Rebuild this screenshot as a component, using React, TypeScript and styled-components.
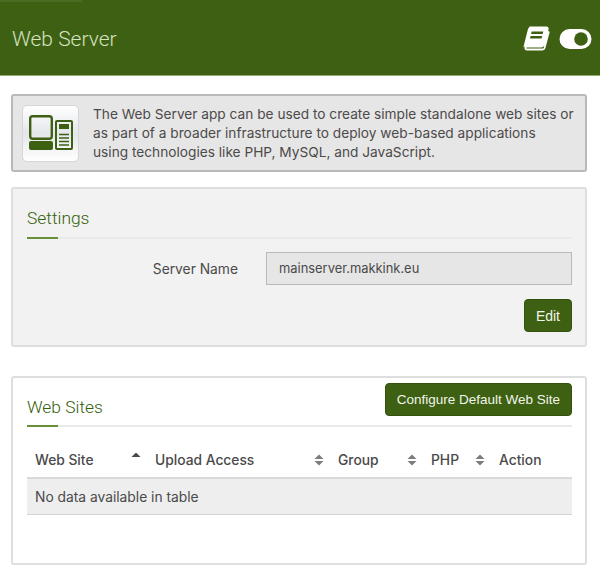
import React from 'react';
import {createGlobalStyle, styled} from 'styled-components';

const GlobalStyle = createGlobalStyle`
  html, body {
    margin: 0;
    padding: 0;
    background: #fff;
  }
  body {
    width: 600px;
    height: 569px;
    overflow: hidden;
    font-family: Inter, 'Open Sans', sans-serif;
    color: #4a4a4a;
  }
`;

const Header = styled.header`
  position: relative;
  display: flex;
  align-items: center;
  justify-content: space-between;
  box-sizing: border-box;
  height: 76px;
  padding: 3px 8px 0 12px;
  background: #3e6012;
  border-bottom: 1px solid #93ab72;
`;

const LoadBar = styled.div`
  position: absolute;
  top: 0;
  left: 0;
  width: 82px;
  height: 2px;
  background: #4b6b22;
`;

const Title = styled.h1`
  margin: 0;
  font-family: Roboto, sans-serif;
  font-size: 21px;
  font-weight: 300;
  color: #d5e2c0;
`;

const Tools = styled.div`
  display: flex;
  align-items: center;
  gap: 9px;
`;

const Content = styled.main`
  display: flex;
  flex-direction: column;
  padding: 18px 13px 0 11px;
`;

const Intro = styled.section`
  display: flex;
  align-items: center;
  gap: 14px;
  box-sizing: border-box;
  height: 78px;
  padding: 0 9px;
  background: #e6e6e6;
  border: 2px solid #b9b9b9;
  border-radius: 3px;
`;

const AppIcon = styled.div`
  display: flex;
  align-items: center;
  justify-content: center;
  flex: none;
  box-sizing: border-box;
  width: 57px;
  height: 57px;
  background: linear-gradient(#fff, #e3e6ea 50%, #fff);
  border: 1px solid #d6d6d6;
  border-radius: 5px;
`;

const IntroText = styled.p`
  margin: 0;
  font-size: 13.7px;
  line-height: 19px;
  color: #4d4a4a;
`;

const Panel = styled.section<{$muted?: boolean; $height: number; $gap: number}>`
  box-sizing: border-box;
  height: ${(p) => p.$height}px;
  margin-top: ${(p) => p.$gap}px;
  padding: 0 13px 0 14px;
  background: ${(p) => (p.$muted ? '#f2f2f2' : '#fff')};
  border: 2px solid #dedede;
  border-radius: 3px;
`;

const PanelHead = styled.div<{$height: number; $titleGap: number}>`
  position: relative;
  display: flex;
  align-items: flex-end;
  box-sizing: border-box;
  height: ${(p) => p.$height}px;
  padding-bottom: ${(p) => p.$titleGap}px;
  border-bottom: 2px solid #eaeaea;

  &::after {
    content: '';
    position: absolute;
    left: 0;
    bottom: -2px;
    width: 31px;
    height: 2px;
    background: #6a8f3a;
  }
`;

const PanelTitle = styled.h2`
  margin: 0;
  font-family: Roboto, sans-serif;
  font-size: 17.4px;
  font-weight: 300;
  line-height: 22px;
  color: #35600a;
`;

const Field = styled.div`
  display: flex;
  align-items: center;
  margin-top: 13px;
`;

const FieldLabel = styled.label`
  width: 211px;
  text-align: right;
  font-size: 13.8px;
`;

const FieldValue = styled.div`
  display: flex;
  align-items: center;
  flex: 1;
  box-sizing: border-box;
  height: 33px;
  margin-left: 28px;
  padding: 0 12px;
  font-size: 12.9px;
  background: #e6e6e6;
  border: 1px solid #b9b9b9;
`;

const Actions = styled.div`
  display: flex;
  justify-content: flex-end;
  margin-top: 14px;
`;

const Button = styled.button`
  box-sizing: border-box;
  height: 33px;
  padding: 0 11px;
  font-family: 'Liberation Sans', Arial, sans-serif;
  font-size: 14px;
  color: #f1f5ea;
  background: #3e6012;
  border: 1px solid #34520e;
  border-radius: 4px;
`;

const FloatingButton = styled(Button)`
  position: absolute;
  top: 5px;
  right: 0;
  font-size: 13.5px;
`;

const Table = styled.table`
  width: 100%;
  table-layout: fixed;
  border-collapse: collapse;
  margin-top: 14px;
  font-size: 13.8px;
`;

const HeadCell = styled.th<{$width: number}>`
  width: ${(p) => p.$width}px;
  box-sizing: border-box;
  height: 37px;
  padding: 2px 6px 0 8px;
  font-weight: 500;
  text-align: left;
  color: #4a4a4a;
  border-bottom: 2px solid #d9d9d9;
`;

const HeadInner = styled.div`
  display: flex;
  align-items: center;
  justify-content: space-between;
`;

const EmptyCell = styled.td`
  height: 35px;
  padding: 0 8px;
  background: #eeeeee;
  border-bottom: 1px solid #d4d4d4;
`;

type SortProps = {
  up?: boolean;
};

const SortIcon = ({up}: SortProps) => (
  <svg width="10" height="14" viewBox="0 0 10 14" aria-hidden="true">
    <path d="M5 1.5 9.5 6h-9z" fill={up ? '#4a4a4a' : '#7d7d7d'} transform={up ? 'translate(0 -2)' : ''} />
    {!up && <path d="M5 12.5.5 8h9z" fill="#7d7d7d" />}
  </svg>
);

const BookIcon = () => (
  <svg width="28" height="26" viewBox="0 0 28 26" aria-hidden="true">
    <path
      d="M8 1.5h16.5c1 0 1.4.7 1.2 1.6L21.5 19c-.3 1-1 1.5-2 1.5H5c-2.2 0-2.2 3 0 3h15.5c1 0 1.8-.5 2-1.4L26.8 6"
      fill="none"
      stroke="#fff"
      strokeWidth="1.8"
      strokeLinecap="round"
    />
    <path
      d="M8 1.5h16.5c1 0 1.4.7 1.2 1.6L21.5 19c-.3 1-1 1.5-2 1.5H3c-1 0-1.5.5-1.8 1.5L6 3c.3-1 1-1.5 2-1.5z"
      fill="#fff"
    />
    <path d="M9.7 5.5h11.6l-.6 2.4H9.1zM8.6 10h11.6l-.6 2.4H8z" fill="#3e6012" />
  </svg>
);

const ToggleIcon = () => (
  <svg width="33" height="22" viewBox="0 0 33 22" aria-hidden="true">
    <rect x="0.5" y="1" width="32" height="20" rx="10" fill="#fff" />
    <circle cx="22" cy="11" r="6.8" fill="#3e6012" />
  </svg>
);

const ServerIcon = () => (
  <svg width="44" height="36" viewBox="0 0 44 36" aria-hidden="true">
    <rect x="1.2" y="1.2" width="21.6" height="22.6" rx="2.5" fill="none" stroke="#3e6012" strokeWidth="2.4" />
    <rect x="0" y="26" width="24" height="9" rx="2" fill="#3e6012" />
    <rect x="27" y="6" width="16" height="28" rx="1" fill="none" stroke="#3e6012" strokeWidth="2" />
    <rect x="30" y="9" width="10" height="5" fill="#3e6012" />
    <path d="M30 19.5h10M30 23h10M30 26.5h10M30 30h10" stroke="#3e6012" strokeWidth="1.6" />
  </svg>
);

const HeadRow = styled.div`
  position: relative;
`;

const columns = [
  {label: 'Web Site', width: 120, up: true},
  {label: 'Upload Access', width: 183},
  {label: 'Group', width: 93},
  {label: 'PHP', width: 68},
  {label: 'Action', width: 81, plain: true},
];

const App = () => (
  <>
    <GlobalStyle />
    <Header>
      <LoadBar />
      <Title>Web Server</Title>
      <Tools>
        <BookIcon />
        <ToggleIcon />
      </Tools>
    </Header>
    <Content>
      <Intro>
        <AppIcon>
          <ServerIcon />
        </AppIcon>
        <IntroText>
          The Web Server app can be used to create simple standalone web sites or
          <br />
          as part of a broader infrastructure to deploy web-based applications
          <br />
          using technologies like PHP, MySQL, and JavaScript.
        </IntroText>
      </Intro>
      <Panel $muted $height={160} $gap={15}>
        <PanelHead $height={50} $titleGap={8}>
          <PanelTitle>Settings</PanelTitle>
        </PanelHead>
        <Field>
          <FieldLabel>Server Name</FieldLabel>
          <FieldValue>mainserver.makkink.eu</FieldValue>
        </Field>
        <Actions>
          <Button>Edit</Button>
        </Actions>
      </Panel>
      <Panel $height={189} $gap={29}>
        <HeadRow>
          <PanelHead $height={49} $titleGap={7}>
            <PanelTitle>Web Sites</PanelTitle>
          </PanelHead>
          <FloatingButton>Configure Default Web Site</FloatingButton>
        </HeadRow>
        <Table>
          <thead>
            <tr>
              {columns.map(({label, width, up, plain}) => (
                <HeadCell key={label} $width={width}>
                  <HeadInner>
                    {label}
                    {!plain && <SortIcon up={up} />}
                  </HeadInner>
                </HeadCell>
              ))}
            </tr>
          </thead>
          <tbody>
            <tr>
              <EmptyCell colSpan={5}>No data available in table</EmptyCell>
            </tr>
          </tbody>
        </Table>
      </Panel>
    </Content>
  </>
);

export default App;
